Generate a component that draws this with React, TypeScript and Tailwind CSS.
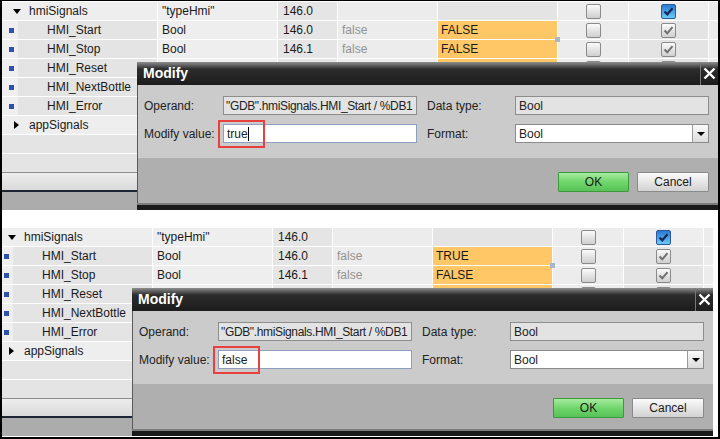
import React from 'react';

type Row = { group?: boolean; open?: boolean; name: string; type: string; off: string };

const ROWS: Row[] = [
  { group: true, open: true, name: 'hmiSignals', type: '"typeHmi"', off: '146.0' },
  { name: 'HMI_Start', type: 'Bool', off: '146.0' },
  { name: 'HMI_Stop', type: 'Bool', off: '146.1' },
  { name: 'HMI_Reset', type: 'Bool', off: '146.2' },
  { name: 'HMI_NextBottle', type: 'Bool', off: '146.3' },
  { name: 'HMI_Error', type: 'Bool', off: '146.4' },
  { group: true, open: false, name: 'appSignals', type: '"typeApp"', off: '148.0' },
];

const Check = ({ state }: { state: 'off' | 'on' | 'blue' }) => {
  if (state === 'blue') {
    return (
      <div className="w-[15px] h-[15px] rounded-[2px] border border-[#2b5a98] bg-[linear-gradient(to_bottom,#2a78d2,#6cc9f7)] flex items-center justify-center">
        <svg width="13" height="13" viewBox="0 0 13 13">
          <path d="M2.5 6.5 L5.3 9.3 L10.5 3.2" fill="none" stroke="#15275a" strokeWidth="2.2" />
        </svg>
      </div>
    );
  }
  return (
    <div className="w-[15px] h-[15px] rounded-[2px] border border-[#8a8a8a] bg-[linear-gradient(to_bottom,#fbfbfb,#e4e4e4_50%,#cfcfcf)] flex items-center justify-center">
      {state === 'on' && (
        <svg width="13" height="13" viewBox="0 0 13 13">
          <path d="M2.5 6.5 L5.3 9.3 L10.5 3.2" fill="none" stroke="#707070" strokeWidth="2" />
        </svg>
      )}
    </div>
  );
};

const TableRow = ({ row, index, firstValue }: { row: Row; index: number; firstValue: string }) => {
  const isItem = !row.group;
  return (
    <div className="flex h-[19px] border-b border-white">
      <div className="w-[156px] shrink-0 h-full border-r border-white flex">
        {row.group ? (
          <div className="flex-1 bg-[#eeeeee] flex items-center">
            <div className="w-[27px] flex justify-center pl-[2px]">
              {row.open ? (
                <div className="w-0 h-0 border-l-[4px] border-r-[4px] border-t-[5px] border-l-transparent border-r-transparent border-t-black" />
              ) : (
                <div className="w-0 h-0 border-t-[4px] border-b-[4px] border-l-[5px] border-t-transparent border-b-transparent border-l-black" />
              )}
            </div>
            <span>{row.name}</span>
          </div>
        ) : (
          <>
            <div className="w-[16px] bg-[#efefef] flex items-center justify-center pl-[2px]">
              <div className="w-[5px] h-[5px] bg-[#2f50ae]" />
            </div>
            <div className="flex-1 bg-[#e4e4e4] flex items-center pl-[29px]">{row.name}</div>
          </>
        )}
      </div>
      <div className="w-[120px] shrink-0 h-full border-r border-white bg-[#eeeeee] flex items-center pl-[4px]">{row.type}</div>
      <div className="w-[60px] shrink-0 h-full border-r border-white bg-[#e5e5e5] flex items-center pl-[5px]">{row.off}</div>
      <div className="w-[100px] shrink-0 h-full border-r border-white bg-[#ececec] flex items-center pl-[4px] text-[#939393]">
        {isItem ? 'false' : ''}
      </div>
      <div
        className={
          isItem
            ? 'w-[120px] shrink-0 h-full border-r border-white bg-[#ffc766] flex items-center pl-[3px] relative'
            : 'w-[120px] shrink-0 h-full border-r border-white bg-[#e4e4e4]'
        }
      >
        {isItem ? (index === 1 ? firstValue : 'FALSE') : ''}
        {index === 1 && <div className="absolute -right-[3px] -bottom-[3px] w-[5px] h-[5px] bg-[#a9b8c9] z-10" />}
      </div>
      <div className="w-[71px] shrink-0 h-full border-r border-white bg-[#ececec] flex items-center justify-center">
        <Check state="off" />
      </div>
      <div
        className={
          row.open
            ? 'w-[80px] shrink-0 h-full border-r border-white bg-[#eeeeee] flex items-center justify-center'
            : 'w-[80px] shrink-0 h-full border-r border-white bg-[#e4e4e4] flex items-center justify-center'
        }
      >
        <Check state={row.open ? 'blue' : 'on'} />
      </div>
      <div className="flex-1 h-full bg-[#ececec]" />
    </div>
  );
};

const Dialog = ({ value }: { value: string }) => (
  <div className="absolute left-[135px] top-[61px] w-[581px] h-[148px] flex flex-col">
    <div className="h-[23px] flex items-center justify-between bg-[linear-gradient(to_bottom,#8e8e8e_0px,#2c2c2c_7px,#1c1c1c_100%)]">
      <span className="pl-[6px] text-white font-bold text-[14px]">Modify</span>
      <div className="w-[18px] h-full border-l border-[#777] flex items-center justify-center">
        <svg width="13" height="13" viewBox="0 0 13 13">
          <path d="M1.5 1.5 L11.5 11.5 M11.5 1.5 L1.5 11.5" stroke="white" strokeWidth="2.4" />
        </svg>
      </div>
    </div>
    <div className="h-[73px] bg-[#cbcbcb] border-l border-[#5a5a5a] pt-[11px] text-[#222]">
      <div className="flex items-center h-[19px] pl-[6px]">
        <span className="w-[79px]">Operand:</span>
        <div className="w-[194px] h-full bg-[#e3e3e3] border border-[#8d8d8d] pl-[2px] flex items-center overflow-hidden whitespace-nowrap tracking-[-0.35px]">
          "GDB".hmiSignals.HMI_Start / %DB1
        </div>
        <span className="w-[88px] ml-[10px]">Data type:</span>
        <div className="w-[194px] h-full bg-[#e3e3e3] border border-[#8d8d8d] pl-[3px] flex items-center">Bool</div>
      </div>
      <div className="flex items-center h-[19px] pl-[6px] mt-[9px]">
        <span className="w-[79px]">Modify value:</span>
        <div className="w-[194px] h-full bg-white border border-[#8ea0bd] pl-[3px] flex items-center">
          {value}
          {value === 'true' && <div className="w-px h-[14px] bg-black" />}
        </div>
        <span className="w-[88px] ml-[10px]">Format:</span>
        <div className="w-[194px] h-full bg-white border border-[#8a8a8a] pl-[3px] flex items-center">
          <span className="flex-1">Bool</span>
          <div className="w-[16px] h-full border-l border-[#9a9a9a] bg-[linear-gradient(to_bottom,#fafafa,#dcdcdc)] flex items-center justify-center">
            <div className="w-0 h-0 border-l-[4px] border-r-[4px] border-t-[4px] border-l-transparent border-r-transparent border-t-black" />
          </div>
        </div>
      </div>
    </div>
    <div className="h-[45px] bg-[#afafaf] border-l border-[#5a5a5a] flex justify-end items-start pt-[14px] pr-[9px] gap-[8px] text-[#1a1a1a]">
      <div className="w-[71px] h-[20px] border border-[#3c9a3c] rounded-[1px] bg-[linear-gradient(to_bottom,#a6eba0,#70d66c_50%,#58c257)] flex items-center justify-center">
        OK
      </div>
      <div className="w-[72px] h-[20px] border border-[#8a8a8a] rounded-[1px] bg-[linear-gradient(to_bottom,#fbfbfb,#e6e6e6_50%,#d2d2d2)] flex items-center justify-center">
        Cancel
      </div>
    </div>
    <div className="h-[7px] bg-[#1a1a1a] border-t-2 border-[#7c7c7c]" />
    <div className="absolute left-[81px] top-[58px] w-[47px] h-[28px] border-2 border-[#e8403f]" />
  </div>
);

const Panel = ({ firstValue, input }: { firstValue: string; input: string }) => (
  <div className="relative w-[716px] h-[211px] pt-[1px]">
    {ROWS.map((r, i) => (
      <TableRow key={r.name} row={r} index={i} firstValue={firstValue} />
    ))}
    <div className="h-[19px] border-b border-white bg-[#e4e4e4]" />
    <div className="h-[19px] bg-[#e4e4e4]" />
    <div className="h-[18px] -mt-px border-t border-[#8e8e8e] bg-[linear-gradient(to_bottom,#ededed,#dadada)]" />
    <div className="h-[2px] bg-[#1d2535]" />
    <div className="h-[18px] bg-[#acacac]" />
    <Dialog value={input} />
  </div>
);

export default function App() {
  return (
    <div className="w-[720px] h-[439px] box-border bg-white border-l-2 border-r-2 border-b-2 border-t border-black overflow-hidden font-['Liberation_Sans',Arial,sans-serif] text-[12px] text-[#1a1a1a]">
      <div className="w-[716px] h-[209px] overflow-hidden">
        <Panel firstValue="FALSE" input="true" />
      </div>
      <div className="w-[711px] h-[210px] overflow-hidden mt-[17px]">
        <div className="-ml-[5px]">
          <Panel firstValue="TRUE" input="false" />
        </div>
      </div>
    </div>
  );
}
